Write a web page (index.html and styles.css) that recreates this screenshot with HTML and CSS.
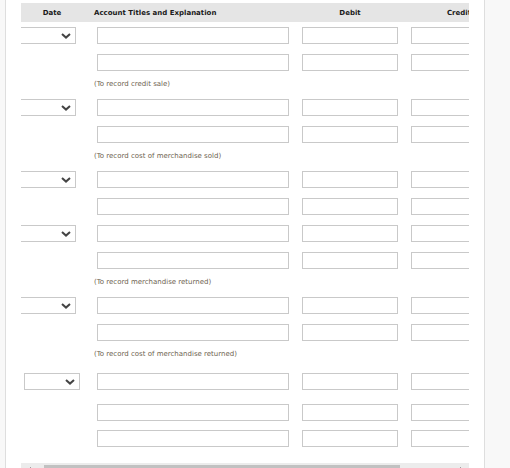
FILE: index.html
```html
<!DOCTYPE html>
<html>
<head>
<meta charset="utf-8">
<link rel="stylesheet" href="styles.css">
</head>
<body>
<div class="card">
  <div class="clip">
    <div class="table">
      <div class="thead">
        <div class="h-date">Date</div>
        <div class="h-acct">Account Titles and Explanation</div>
        <div class="h-debit">Debit</div>
        <div class="h-credit">Credit</div>
      </div>

      <div class="row first">
        <div class="c-date"><div class="sel"><svg class="chev" viewBox="0 0 10 6" width="10" height="6"><polyline points="1,1 5,4.6 9,1"/></svg></div></div>
        <div class="c-acct"><input class="in" type="text"></div>
        <div class="c-debit"><input class="in" type="text"></div>
        <div class="c-credit"><input class="in" type="text"></div>
      </div>
      <div class="row">
        <div class="c-date"></div>
        <div class="c-acct"><input class="in" type="text"></div>
        <div class="c-debit"><input class="in" type="text"></div>
        <div class="c-credit"><input class="in" type="text"></div>
      </div>
      <div class="note">(To record credit sale)</div>

      <div class="row after-note">
        <div class="c-date"><div class="sel"><svg class="chev" viewBox="0 0 10 6" width="10" height="6"><polyline points="1,1 5,4.6 9,1"/></svg></div></div>
        <div class="c-acct"><input class="in" type="text"></div>
        <div class="c-debit"><input class="in" type="text"></div>
        <div class="c-credit"><input class="in" type="text"></div>
      </div>
      <div class="row">
        <div class="c-date"></div>
        <div class="c-acct"><input class="in" type="text"></div>
        <div class="c-debit"><input class="in" type="text"></div>
        <div class="c-credit"><input class="in" type="text"></div>
      </div>
      <div class="note">(To record cost of merchandise sold)</div>

      <div class="row after-note">
        <div class="c-date"><div class="sel"><svg class="chev" viewBox="0 0 10 6" width="10" height="6"><polyline points="1,1 5,4.6 9,1"/></svg></div></div>
        <div class="c-acct"><input class="in" type="text"></div>
        <div class="c-debit"><input class="in" type="text"></div>
        <div class="c-credit"><input class="in" type="text"></div>
      </div>
      <div class="row">
        <div class="c-date"></div>
        <div class="c-acct"><input class="in" type="text"></div>
        <div class="c-debit"><input class="in" type="text"></div>
        <div class="c-credit"><input class="in" type="text"></div>
      </div>

      <div class="row">
        <div class="c-date"><div class="sel"><svg class="chev" viewBox="0 0 10 6" width="10" height="6"><polyline points="1,1 5,4.6 9,1"/></svg></div></div>
        <div class="c-acct"><input class="in" type="text"></div>
        <div class="c-debit"><input class="in" type="text"></div>
        <div class="c-credit"><input class="in" type="text"></div>
      </div>
      <div class="row">
        <div class="c-date"></div>
        <div class="c-acct"><input class="in" type="text"></div>
        <div class="c-debit"><input class="in" type="text"></div>
        <div class="c-credit"><input class="in" type="text"></div>
      </div>
      <div class="note">(To record merchandise returned)</div>

      <div class="row after-note">
        <div class="c-date"><div class="sel"><svg class="chev" viewBox="0 0 10 6" width="10" height="6"><polyline points="1,1 5,4.6 9,1"/></svg></div></div>
        <div class="c-acct"><input class="in" type="text"></div>
        <div class="c-debit"><input class="in" type="text"></div>
        <div class="c-credit"><input class="in" type="text"></div>
      </div>
      <div class="row">
        <div class="c-date"></div>
        <div class="c-acct"><input class="in" type="text"></div>
        <div class="c-debit"><input class="in" type="text"></div>
        <div class="c-credit"><input class="in" type="text"></div>
      </div>
      <div class="note">(To record cost of merchandise returned)</div>

      <div class="row last-sel">
        <div class="c-date"><div class="sel full"><svg class="chev" viewBox="0 0 10 6" width="10" height="6"><polyline points="1,1 5,4.6 9,1"/></svg></div></div>
        <div class="c-acct"><input class="in" type="text"></div>
        <div class="c-debit"><input class="in" type="text"></div>
        <div class="c-credit"><input class="in" type="text"></div>
      </div>
      <div class="row gap14">
        <div class="c-date"></div>
        <div class="c-acct"><input class="in" type="text"></div>
        <div class="c-debit"><input class="in" type="text"></div>
        <div class="c-credit"><input class="in" type="text"></div>
      </div>
      <div class="row gap9">
        <div class="c-date"></div>
        <div class="c-acct"><input class="in" type="text"></div>
        <div class="c-debit"><input class="in" type="text"></div>
        <div class="c-credit"><input class="in" type="text"></div>
      </div>
    </div>

    <div class="hscroll">
      <div class="sb-btn"><svg viewBox="0 0 8 8" width="8" height="8"><polygon points="6,0 2,4 6,8"/></svg></div>
      <div class="sb-track"><div class="sb-thumb"></div></div>
      <div class="sb-btn"><svg viewBox="0 0 8 8" width="8" height="8"><polygon points="2,0 6,4 2,8"/></svg></div>
    </div>
  </div>
</div>
</body>
</html>
```

FILE: styles.css
```css
html, body {
  margin: 0;
  padding: 0;
  height: 468px;
  overflow: hidden;
  background: #f8f8f8;
}

body {
  font-family: "DejaVu Sans", Verdana, sans-serif;
}

.card {
  margin-left: 5px;
  height: 468px;
  border-left: 1px solid #dedede;
  border-right: 1px solid #dedede;
  background: #ffffff;
  padding: 3px 15px 0 15px;
  box-sizing: border-box;
  width: 480px;
}

.clip {
  width: 448px;
  overflow: hidden;
}

.table {
  width: 520px;
  display: flex;
  flex-direction: column;
}

.thead {
  display: flex;
  height: 19px;
  align-items: center;
  background: #e5e5e5;
  width: 448px;
  font-weight: bold;
  font-size: 7px;
  color: #1a1a1a;
  white-space: nowrap;
}

.h-date {
  width: 62px;
  text-align: center;
  flex: none;
  margin-right: 11px;
}

.h-acct {
  width: 208px;
  flex: none;
}

.h-debit {
  width: 96px;
  text-align: center;
  flex: none;
  margin-right: 13px;
}

.h-credit {
  width: 96px;
  text-align: center;
  flex: none;
}

.row {
  display: flex;
  height: 17px;
  margin-top: 10px;
}

.row.first {
  margin-top: 5px;
}

.row.after-note {
  margin-top: 9px;
}

.row.last-sel {
  margin-top: 13px;
}

.row.gap14 {
  margin-top: 14px;
}

.row.gap9 {
  margin-top: 9px;
}

.c-date {
  width: 76px;
  flex: none;
}

.c-acct {
  width: 205px;
  flex: none;
}

.c-debit {
  width: 109px;
  flex: none;
}

.c-credit {
  width: 96px;
  flex: none;
}

.in {
  display: block;
  margin: 0;
  padding: 0;
  height: 17px;
  box-sizing: border-box;
  border: 1px solid #c9c9c9;
  background: #ffffff;
  outline: none;
}

.c-acct .in {
  width: 192px;
}

.c-debit .in,
.c-credit .in {
  width: 96px;
}

.sel {
  height: 17px;
  width: 66px;
  margin-left: -11px;
  box-sizing: border-box;
  border: 1px solid #c9c9c9;
  background: #ffffff;
  display: flex;
  align-items: center;
  justify-content: flex-end;
  padding-right: 4px;
}

.sel.full {
  width: 56px;
  margin-left: 3px;
}

.chev {
  display: block;
  fill: none;
  stroke: #444444;
  stroke-width: 2;
}

.note {
  height: 12px;
  line-height: 12px;
  margin-top: 7px;
  margin-left: 73px;
  font-size: 7px;
  color: #6e6350;
  white-space: nowrap;
}

.hscroll {
  display: flex;
  height: 15px;
  margin-top: 16px;
  background: #ececec;
}

.sb-btn {
  width: 15px;
  flex: none;
  display: flex;
  align-items: center;
  justify-content: center;
}

.sb-btn svg {
  fill: #505050;
}

.sb-track {
  flex: 1;
  padding: 2px 54px 2px 8px;
}

.sb-thumb {
  height: 11px;
  background: #c1c1c1;
}
```
